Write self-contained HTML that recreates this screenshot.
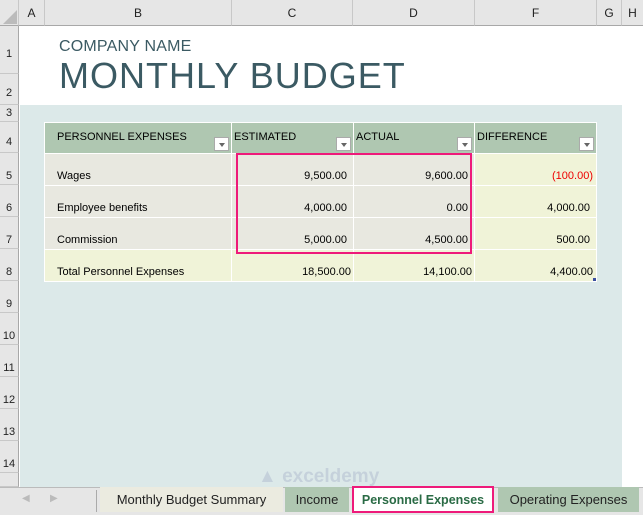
<!DOCTYPE html>
<html><head><meta charset="utf-8"><style>
*{margin:0;padding:0;box-sizing:border-box}
body{width:643px;height:515px;position:relative;overflow:hidden;background:#fff;font-family:"Liberation Sans",sans-serif;color:#000}
.a{position:absolute}
.ch{position:absolute;top:0;height:26px;background:#e6e6e6;border-right:1px solid #c8c8c8;border-bottom:1px solid #a8a8a8;font-size:12px;text-align:center;line-height:26px;color:#222}
.rh{position:absolute;left:0;width:19px;background:#e6e6e6;border-right:1px solid #a8a8a8;border-bottom:1px solid #c8c8c8;font-size:11px;text-align:center;color:#222}
.cell{position:absolute;font-size:11px;white-space:nowrap}
.dd{position:absolute;width:15px;height:14px;background:#fff;border:1px solid #aaa}
.dd:after{content:"";position:absolute;left:4px;top:5px;border-left:3px solid transparent;border-right:3px solid transparent;border-top:4px solid #666}
.tab{position:absolute;top:487px;height:25px;font-size:13px;line-height:26px;text-align:center;color:#222}
</style></head><body>
<div class="ch" style="left:0;width:19px"></div>
<div class="a" style="left:3px;top:10px;border-left:14px solid transparent;border-bottom:14px solid #bbb;width:0;height:0"></div>
<div class="ch" style="left:19px;width:26px">A</div>
<div class="ch" style="left:45px;width:187px">B</div>
<div class="ch" style="left:232px;width:121px">C</div>
<div class="ch" style="left:353px;width:122px">D</div>
<div class="ch" style="left:475px;width:122px">F</div>
<div class="ch" style="left:597px;width:25px">G</div>
<div class="ch" style="left:622px;width:21px;border-right:none">H</div>

<div class="rh" style="top:26px;height:48px;line-height:40px;padding-top:8px">1</div>
<div class="rh" style="top:74px;height:31px;line-height:24px;padding-top:7px">2</div>
<div class="rh" style="top:105px;height:17px;line-height:16px">3</div>
<div class="rh" style="top:122px;height:31px;line-height:40px">4</div>
<div class="rh" style="top:153px;height:32px;line-height:46px">5</div>
<div class="rh" style="top:185px;height:32px;line-height:46px">6</div>
<div class="rh" style="top:217px;height:32px;line-height:46px">7</div>
<div class="rh" style="top:249px;height:32px;line-height:46px">8</div>
<div class="rh" style="top:281px;height:32px;line-height:46px">9</div>
<div class="rh" style="top:313px;height:32px;line-height:46px">10</div>
<div class="rh" style="top:345px;height:32px;line-height:46px">11</div>
<div class="rh" style="top:377px;height:32px;line-height:46px">12</div>
<div class="rh" style="top:409px;height:32px;line-height:46px">13</div>
<div class="rh" style="top:441px;height:32px;line-height:46px">14</div>
<div class="rh" style="top:473px;height:14px"></div>

<div class="a" style="left:59px;top:38px;font-size:16px;color:#3b5a63;letter-spacing:0.2px">COMPANY NAME</div>
<div class="a" style="left:59px;top:55px;font-size:36px;color:#3b5a63;letter-spacing:1px">MONTHLY BUDGET</div>

<div class="a" style="left:20px;top:105px;width:602px;height:382px;background:#dce9e9"></div>

<div class="a" style="left:44px;top:122px;width:552px;height:31px;background:#afc7b1"></div>
<div class="a" style="left:44px;top:153px;width:188px;height:96px;background:#e8e8e0"></div>
<div class="a" style="left:232px;top:153px;width:243px;height:96px;background:#e8e8e0"></div>
<div class="a" style="left:475px;top:153px;width:121px;height:96px;background:#f0f3d8"></div>
<div class="a" style="left:44px;top:249px;width:552px;height:32px;background:#f0f3d8"></div>
<div class="a" style="left:44px;top:122px;width:552px;height:1px;background:#fff"></div>
<div class="a" style="left:44px;top:153px;width:552px;height:1px;background:#fff"></div>
<div class="a" style="left:44px;top:185px;width:552px;height:1px;background:#fff"></div>
<div class="a" style="left:44px;top:217px;width:552px;height:1px;background:#fff"></div>
<div class="a" style="left:44px;top:249px;width:552px;height:1px;background:#fff"></div>
<div class="a" style="left:44px;top:281px;width:553px;height:1px;background:#fff"></div>
<div class="a" style="left:44px;top:122px;width:1px;height:160px;background:#fff"></div>
<div class="a" style="left:231px;top:122px;width:1px;height:160px;background:#fff"></div>
<div class="a" style="left:353px;top:122px;width:1px;height:160px;background:#fff"></div>
<div class="a" style="left:474px;top:122px;width:1px;height:160px;background:#fff"></div>
<div class="a" style="left:596px;top:122px;width:1px;height:160px;background:#fff"></div>

<div class="cell" style="left:57px;top:131px">PERSONNEL EXPENSES</div>
<div class="cell" style="left:234px;top:131px">ESTIMATED</div>
<div class="cell" style="left:356px;top:131px">ACTUAL</div>
<div class="cell" style="left:477px;top:131px">DIFFERENCE</div>
<div class="dd" style="left:214px;top:137px"></div>
<div class="dd" style="left:336px;top:137px"></div>
<div class="dd" style="left:457px;top:137px"></div>
<div class="dd" style="left:579px;top:137px"></div>

<div class="cell" style="left:57px;top:170px">Wages</div>
<div class="cell" style="left:57px;top:202px">Employee benefits</div>
<div class="cell" style="left:57px;top:234px">Commission</div>
<div class="cell" style="left:57px;top:266px">Total Personnel Expenses</div>

<div class="cell" style="right:296px;top:170px">9,500.00</div>
<div class="cell" style="right:296px;top:202px">4,000.00</div>
<div class="cell" style="right:296px;top:234px">5,000.00</div>
<div class="cell" style="right:292px;top:266px">18,500.00</div>
<div class="cell" style="right:175px;top:170px">9,600.00</div>
<div class="cell" style="right:175px;top:202px">0.00</div>
<div class="cell" style="right:175px;top:234px">4,500.00</div>
<div class="cell" style="right:171px;top:266px">14,100.00</div>
<div class="cell" style="right:50px;top:170px;color:#e00">(100.00)</div>
<div class="cell" style="right:53px;top:202px">4,000.00</div>
<div class="cell" style="right:53px;top:234px">500.00</div>
<div class="cell" style="right:50px;top:266px">4,400.00</div>
<div class="a" style="left:593px;top:278px;width:3px;height:3px;background:#3b4fa0"></div>

<div class="a" style="left:236px;top:153px;width:236px;height:101px;border:2px solid #ee1a7a"></div>

<div class="a" style="left:0;top:487px;width:643px;height:28px;background:#e6e6e6;border-top:1px solid #bbb"></div>
<div class="a" style="left:22px;top:493px;font-size:10px;color:#bbb">&#9664;</div>
<div class="a" style="left:50px;top:493px;font-size:10px;color:#bbb">&#9654;</div>
<div class="a" style="left:96px;top:490px;width:1px;height:22px;background:#aaa"></div>
<div class="tab" style="left:100px;width:183px;background:#ebebe0">Monthly Budget Summary</div>
<div class="tab" style="left:285px;width:64px;background:#afc7b1">Income</div>
<div class="tab" style="left:352px;width:142px;background:#fff;color:#2a6b45;font-weight:bold;font-size:12.5px;border:2px solid #ee1a7a;height:27px;top:486px;line-height:24px">Personnel Expenses</div>
<div class="tab" style="left:498px;width:141px;background:#afc7b1">Operating Expenses</div>
<div class="a" style="left:258px;top:466px;font-size:19px;font-weight:bold;color:#c0ccd8;opacity:.8">&#9650; exceldemy</div>
</body></html>
